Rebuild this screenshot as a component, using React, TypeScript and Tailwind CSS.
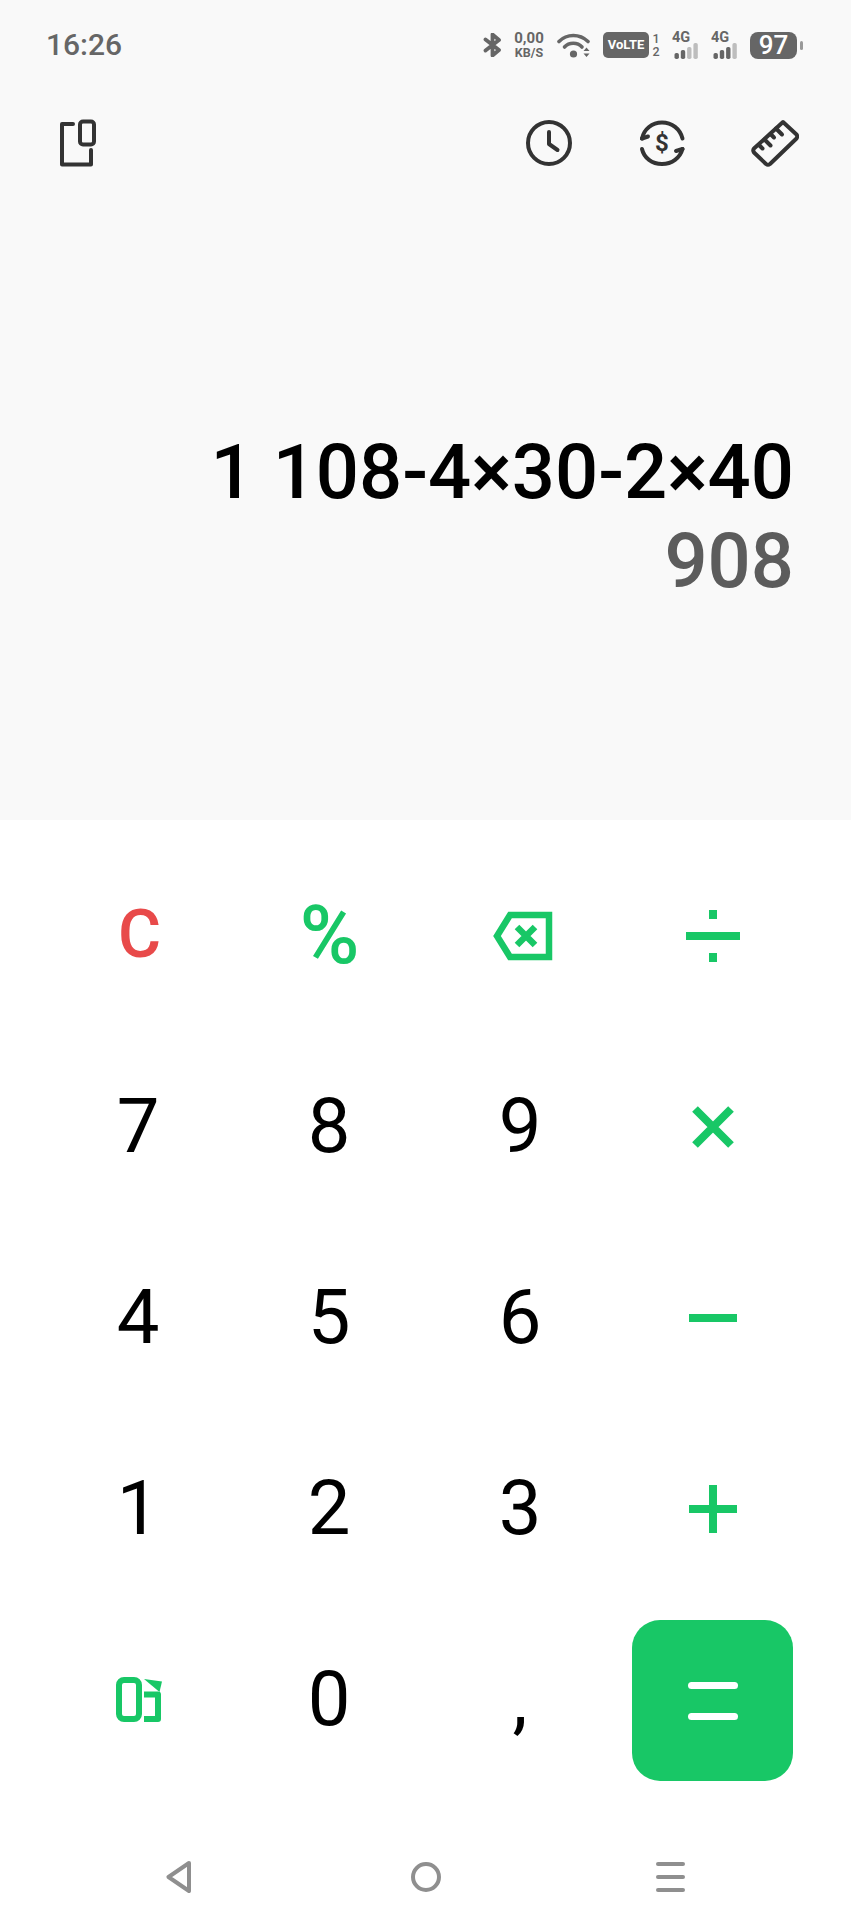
const GREEN = "#18c766";

function Bluetooth() {
  return (
    <svg width="19" height="24" viewBox="0 0 19 24" fill="none" stroke="#666" strokeWidth="3.8" strokeLinejoin="round" strokeLinecap="round">
      <path d="M2.5 6.5 16 17 9.5 22.5V1.5L16 7 2.5 17.5" />
    </svg>
  );
}

function Wifi() {
  return (
    <svg width="33" height="25" viewBox="0 0 33 25" fill="none" stroke="#666" strokeWidth="3.6" strokeLinecap="round">
      <path d="M2 8.5C10 .5 22.5 .5 31 8.5" />
      <path d="M7.5 14C12 9 20.5 9 25 14" />
      <circle cx="16.5" cy="21" r="3.6" fill="#666" stroke="none" />
      <path d="M26.5 18h6l-3-3.5zM26.5 20.5h6l-3 3.5z" fill="#666" stroke="none" />
    </svg>
  );
}

function Signal({ on }: { on: number }) {
  const heights = [6, 9, 12, 16];
  return (
    <div className="flex w-[27px] flex-col">
      <span className="text-[14.5px] leading-[12px] font-bold text-[#666]">4G</span>
      <svg width="27" height="16" viewBox="0 0 27 16" className="mt-[-1px]">
        {heights.map((h, i) => (
          <rect key={i} x={i * 6.3 + 2.5} y={16 - h} width="4.4" height={h} rx="1.8" fill={i < on ? "#666" : "#bdbdbd"} />
        ))}
      </svg>
    </div>
  );
}

function StatusBar() {
  return (
    <div className="flex h-[90px] items-center pl-[46px] font-['Roboto',sans-serif]">
      <span className="w-[80px] text-[30px] leading-none font-medium text-[#666]">16:26</span>
      <div className="ml-[357px] flex items-center">
        <Bluetooth />
        <div className="ml-[12px] flex w-[30px] flex-col items-center font-bold text-[#666]">
          <span className="text-[15px] leading-[15px]">0,00</span>
          <span className="text-[12.5px] leading-[13px]">KB/S</span>
        </div>
        <div className="ml-[13px] flex">
          <Wifi />
        </div>
        <div className="ml-[13px] flex h-[26px] w-[46px] items-center justify-center rounded-[5px] bg-[#666] text-[13px] font-bold text-white">
          VoLTE
        </div>
        <div className="ml-[4px] flex w-[6px] flex-col items-center text-[12.5px] leading-[13px] font-medium text-[#666]">
          <span>1</span>
          <span>2</span>
        </div>
        <div className="ml-[13px]">
          <Signal on={2} />
        </div>
        <div className="ml-[12px]">
          <Signal on={3} />
        </div>
        <div className="ml-[12px] flex h-[27px] w-[47px] items-center justify-center rounded-[8px] bg-[#666] text-[26px] leading-none font-medium text-white">
          97
        </div>
        <div className="ml-[3px] h-[9px] w-[3px] rounded-full bg-[#999]" />
      </div>
    </div>
  );
}

function Toolbar() {
  const common = { width: 48, height: 48, fill: "none", stroke: "#333", strokeWidth: 4, strokeLinecap: "round" as const, strokeLinejoin: "round" as const };
  return (
    <div className="flex h-[106px] items-center justify-between pr-[52px] pl-[54px]">
      <svg viewBox="0 0 48 48" {...common}>
        <path d="M19 5H8V45.5H37V31" />
        <rect x="26" y="2.5" width="14" height="23" rx="3" />
      </svg>
      <div className="flex gap-[65px]">
        <svg viewBox="0 0 48 48" {...common}>
          <circle cx="24" cy="24" r="21" />
          <path d="M24 13V25L32.5 31" />
        </svg>
        <svg viewBox="0 0 48 48" {...common}>
          <path d="M4 19.5C6 10 14 3.5 24 3.5S42 10 44.5 19.5" />
          <path d="M4 19.5 10 17.5" />
          <path d="M4 30C6 39 14 45 24 45S42 39 44.5 30" />
          <path d="M44.5 30 38 32" />
          <text x="24" y="32" textAnchor="middle" fontSize="24" fontWeight="700" fill="#333" stroke="none" fontFamily="Roboto, sans-serif">$</text>
        </svg>
        <svg viewBox="0 0 48 48" {...common}>
          <path d="M32 3 45.5 15.5Q47 17.5 45.5 19.5L19 45Q17 46.5 15 45L3 33.5Q1.5 31.5 3 29.5Z" />
          <path d="M25 9.5 31 15.5" />
          <path d="M19.5 15 23 18.5" />
          <path d="M13.5 20.5 19.5 26.5" />
          <path d="M8 26 11.5 29.5" />
        </svg>
      </div>
    </div>
  );
}

function Display() {
  return (
    <div className="flex flex-col items-end pt-[232px] pr-[57px] font-['Roboto',sans-serif] font-medium">
      <div className="text-[76px] leading-[89px] whitespace-nowrap text-black">1 108-4×30-2×40</div>
      <div className="text-[76px] leading-[89px] text-[#5c5c5c]">908</div>
    </div>
  );
}

function Backspace() {
  return (
    <svg width="64" height="54" viewBox="0 0 64 54" fill="none" stroke={GREEN} strokeWidth="6.5">
      <path d="M59 6H20L7 27 20 48H59Z" />
      <path d="M27 18 45 36M45 18 27 36" />
    </svg>
  );
}

function Divide() {
  return (
    <div className="flex w-[54px] flex-col items-center">
      <div className="h-[9px] w-[8px] bg-[#18c766]" />
      <div className="mt-[13px] h-[8px] w-[54px] bg-[#18c766]" />
      <div className="mt-[13px] h-[9px] w-[8px] bg-[#18c766]" />
    </div>
  );
}

function Times() {
  return (
    <svg width="42" height="42" viewBox="0 0 42 42" stroke={GREEN} strokeWidth="8">
      <path d="M3 3 39 39M39 3 3 39" />
    </svg>
  );
}

function Minus() {
  return <div className="h-[8px] w-[48px] bg-[#18c766]" />;
}

function Plus() {
  return (
    <svg width="48" height="48" viewBox="0 0 48 48" stroke={GREEN} strokeWidth="8">
      <path d="M0 24H48M24 0V48" />
    </svg>
  );
}

function Scientific() {
  return (
    <svg width="50" height="48" viewBox="0 0 50 48" fill="none" stroke={GREEN} strokeWidth="6" strokeLinejoin="round" className="mr-[3px]">
      <rect x="6" y="4" width="20" height="39" rx="5" />
      <path d="M31 18.5H45V43H31" />
      <path d="M31 3 49 5.5 46.5 16Z" fill={GREEN} stroke="none" />
    </svg>
  );
}

function Equals() {
  return (
    <div className="mt-[2px] flex h-[161px] w-[161px] flex-col items-center justify-center gap-[24px] rounded-[28px] bg-[#18c766]">
      <div className="h-[7px] w-[50px] rounded-full bg-white" />
      <div className="h-[7px] w-[50px] rounded-full bg-white" />
    </div>
  );
}

const digit = "pr-[3px] pb-[1px] text-[76px] leading-none text-black";

const KEYS = [
  <span className="pb-[2px] text-[66px] leading-none font-medium text-[#e84a4a]">C</span>,
  <span className="pr-[2px] text-[81px] leading-none font-medium text-[#18c766]">%</span>,
  <Backspace />,
  <Divide />,
  <span className={digit}>7</span>,
  <span className={digit}>8</span>,
  <span className={digit}>9</span>,
  <Times />,
  <span className={digit}>4</span>,
  <span className={digit}>5</span>,
  <span className={digit}>6</span>,
  <Minus />,
  <span className={digit}>1</span>,
  <span className={digit}>2</span>,
  <span className={digit}>3</span>,
  <Plus />,
  <Scientific />,
  <span className={digit}>0</span>,
  <span className={digit}>,</span>,
  <Equals />,
];

function Keypad() {
  return (
    <div className="grid grid-cols-[repeat(4,191px)] grid-rows-[repeat(5,191px)] pt-[20px] pl-[44px] font-['Roboto',sans-serif]">
      {KEYS.map((key, i) => (
        <div key={i} className="flex items-center justify-center">
          {key}
        </div>
      ))}
    </div>
  );
}

function NavBar() {
  return (
    <div className="flex items-center pt-[66px] pl-[166px]">
      <svg width="26" height="32" viewBox="0 0 26 32" fill="none" stroke="#8f8f8f" strokeWidth="4" strokeLinejoin="round">
        <path d="M23 2 2.5 16 23 30Z" />
      </svg>
      <svg width="30" height="30" viewBox="0 0 30 30" fill="none" stroke="#8f8f8f" strokeWidth="4" className="ml-[219px]">
        <circle cx="15" cy="15" r="13" />
      </svg>
      <div className="ml-[215px] flex w-[29px] flex-col gap-[9px]">
        <div className="h-[4px] rounded-full bg-[#8f8f8f]" />
        <div className="h-[4px] rounded-full bg-[#8f8f8f]" />
        <div className="h-[4px] rounded-full bg-[#8f8f8f]" />
      </div>
    </div>
  );
}

export default function App() {
  return (
    <div className="h-[1920px] w-[851px] overflow-hidden bg-white">
      <div className="h-[820px] bg-[#f9f9f9]">
        <StatusBar />
        <Toolbar />
        <Display />
      </div>
      <Keypad />
      <NavBar />
    </div>
  );
}
